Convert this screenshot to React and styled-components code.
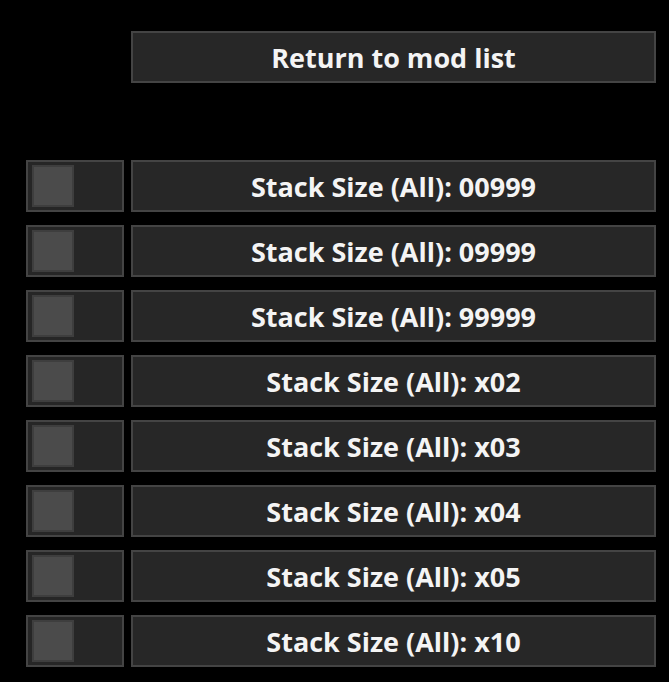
import styled, { createGlobalStyle } from 'styled-components';

const GlobalStyle = createGlobalStyle`
  html, body {
    margin: 0;
    padding: 0;
    background: #000;
  }
  body {
    font-family: "Open Sans", "Noto Sans", sans-serif;
  }
`;

const mods = ['00999', '09999', '99999', 'x02', 'x03', 'x04', 'x05', 'x10'];

const Screen = styled.div`
  width: 669px;
  height: 682px;
  background: #000;
  box-sizing: border-box;
  padding: 31px 0 0 26px;
  display: grid;
  grid-template-columns: 98px 525px;
  column-gap: 7px;
  row-gap: 13px;
  align-content: start;
`;

const Panel = styled.button`
  box-sizing: border-box;
  height: 52px;
  margin: 0;
  padding: 0;
  background: #272727;
  border: 2px solid #444;
  color: #f4f4f4;
  font-family: "Open Sans", "Noto Sans", sans-serif;
  font-weight: 700;
  font-size: 27px;
  line-height: 1;
  text-align: center;
  cursor: pointer;
`;

const BackButton = styled(Panel)`
  grid-column: 2;
  margin-bottom: 64px;
`;

const Toggle = styled.div`
  box-sizing: border-box;
  height: 52px;
  background: #262626;
  border: 2px solid #444;
  padding: 0 4px;
  display: flex;
  align-items: center;
`;

const Knob = styled.div`
  box-sizing: border-box;
  width: 42px;
  height: 42px;
  background: #4b4b4b;
  border: 2px solid #3e3e3e;
`;

export default function App() {
  return (
    <>
      <GlobalStyle />
      <Screen>
        <BackButton>Return to mod list</BackButton>
        {mods.map((m) => (
          <>
            <Toggle key={m + 't'}><Knob /></Toggle>
            <Panel key={m}>Stack Size (All): {m}</Panel>
          </>
        ))}
      </Screen>
    </>
  );
}
